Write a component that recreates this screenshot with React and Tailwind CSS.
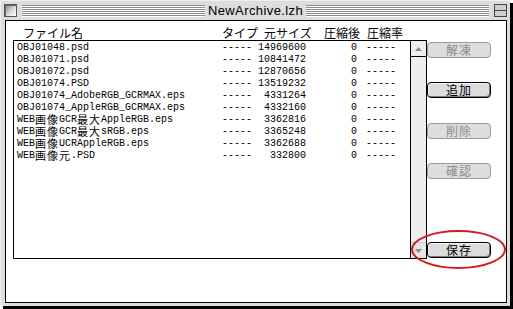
import React from "react";

const MONO = "font-['Liberation_Mono','Noto_Sans_CJK_JP',monospace]";

function Mixed({ text }) {
  const parts = text.match(/[\x00-\x7f]+|[^\x00-\x7f]+/g) || [];
  return (
    <span className="flex items-start h-[12px]">
      {parts.map((p, i) =>
        /^[\x00-\x7f]+$/.test(p) ? (
          <span key={i} className="block h-[12px] leading-[12px]">{p}</span>
        ) : (
          <span key={i} className="block h-[11px] font-['Noto_Sans_CJK_JP',sans-serif] text-[11px] leading-[11px] tracking-[1px]">
            {p}
          </span>
        )
      )}
    </span>
  );
}

const rows = [
  ["OBJ01048.psd", "14969600"],
  ["OBJ01071.psd", "10841472"],
  ["OBJ01072.psd", "12870656"],
  ["OBJ01074.PSD", "13519232"],
  ["OBJ01074_AdobeRGB_GCRMAX.eps", "4331264"],
  ["OBJ01074_AppleRGB_GCRMAX.eps", "4332160"],
  ["WEB画像GCR最大AppleRGB.eps", "3362816"],
  ["WEB画像GCR最大sRGB.eps", "3365248"],
  ["WEB画像UCRAppleRGB.eps", "3362688"],
  ["WEB画像元.PSD", "332800"],
];

function Btn({ label, enabled }) {
  return enabled ? (
    <div className="w-[64px] h-[16px] rounded-[4px] border border-black bg-[#dcdcdc] shadow-[inset_-1px_-1px_0_#7a7a7a,inset_1px_1px_0_#f4f4f4] flex items-center justify-center font-['Noto_Sans_CJK_JP',sans-serif] text-[12px] leading-[12px] text-black tracking-[1px]">
      {label}
    </div>
  ) : (
    <div className="w-[64px] h-[16px] rounded-[4px] border border-[#9a9a9a] bg-[#dddddd] flex items-center justify-center font-['Noto_Sans_CJK_JP',sans-serif] text-[12px] leading-[12px] text-[#8c8c8c] tracking-[1px]">
      {label}
    </div>
  );
}

function Stripes() {
  return (
    <div className="flex-1 h-[12px] bg-[repeating-linear-gradient(to_bottom,#8c8c8c_0px,#8c8c8c_1px,#ffffff_1px,#ffffff_2px)]" />
  );
}

export default function App() {
  return (
    <div className="relative w-[513px] h-[309px] bg-white overflow-hidden">
      <div className="w-[510px] h-[306px] bg-[#dddddd] shadow-[3px_3px_0_#000] flex flex-col border-l border-t border-l-[#f0f0f0] border-t-[#f0f0f0]">
        {/* title bar */}
        <div className="h-[19px] flex items-center pl-[3px] pr-[3px]">
          <div className="w-[13px] h-[13px] border border-[#555] bg-[linear-gradient(135deg,#888,#ddd_60%,#fff)] shadow-[inset_1px_1px_0_#666]" />
          <div className="flex-1 flex items-center ml-[5px] mr-[5px]">
            <Stripes />
            <div className="px-[3px] font-['Liberation_Sans',sans-serif] text-[13px] leading-[14px] tracking-[0.4px] text-black">
              NewArchive.lzh
            </div>
            <Stripes />
          </div>
          <div className="w-[13px] h-[13px] border border-[#444] bg-[#cfcfcf] flex flex-col justify-center">
            <div className="h-[1px] bg-[#444]" />
          </div>
        </div>

        {/* content */}
        <div className="flex-1 flex pl-[4px] pr-[3px] pb-[3px]">
          <div className="flex-1 border border-black bg-white flex flex-col">
            {/* header */}
            <div className="h-[19px] pt-[6px] flex font-['Noto_Sans_CJK_JP',sans-serif] text-[12px] leading-[12px] text-black">
              <div className="w-[216px] pl-[17px]">ファイル名</div>
              <div className="w-[42px]">タイプ</div>
              <div className="w-[60px]">元サイズ</div>
              <div className="w-[43px]">圧縮後</div>
              <div>圧縮率</div>
            </div>

            <div className="flex ml-[7px]">
              {/* list */}
              <div className="w-[414px] h-[219px] border border-black flex">
                <div className={`w-[396px] pt-[1px] ${MONO} text-[10px] leading-[12px] text-black`}>
                  {rows.map(([name, size], i) => (
                    <div key={i} className="h-[12px] flex items-start whitespace-nowrap">
                      <div className="w-[208px] pl-[3px]">
                        <Mixed text={name} />
                      </div>
                      <div className="w-[30px]">-----</div>
                      <div className="w-[54px] text-right">{size}</div>
                      <div className="w-[51px] text-right">0</div>
                      <div className="w-[39px] pl-[9px]">-----</div>
                    </div>
                  ))}
                </div>
                <div className="w-[16px] border-l border-black bg-[#eeeeee] flex flex-col justify-between">
                  <div className="h-[16px] border-b border-black bg-[#eeeeee] flex items-center justify-center">
                    <svg width="7" height="4" viewBox="0 0 7 4">
                      <polygon points="3.5,0 7,4 0,4" fill="#8a8a8a" />
                    </svg>
                  </div>
                  <div className="h-[16px] border-t border-[#c8c8c8] bg-[#e6e6e6] flex items-center justify-center">
                    <svg width="7" height="4" viewBox="0 0 7 4">
                      <polygon points="0,0 7,0 3.5,4" fill="#8a8a8a" />
                    </svg>
                  </div>
                </div>
              </div>

              {/* buttons */}
              <div className="flex flex-col pt-[2px]">
                <Btn label="解凍" />
                <div className="mt-[24px]">
                  <Btn label="追加" enabled />
                </div>
                <div className="mt-[25px]">
                  <Btn label="削除" />
                </div>
                <div className="mt-[24px]">
                  <Btn label="確認" />
                </div>
                <div className="mt-[63px]">
                  <Btn label="保存" enabled />
                </div>
              </div>
            </div>
          </div>
        </div>
      </div>

      {/* red annotation ellipse */}
      <div className="absolute left-[411px] top-[230px] w-[95px] h-[39px] rounded-[50%] border-[2px] border-[#d41b1b]" />
    </div>
  );
}
